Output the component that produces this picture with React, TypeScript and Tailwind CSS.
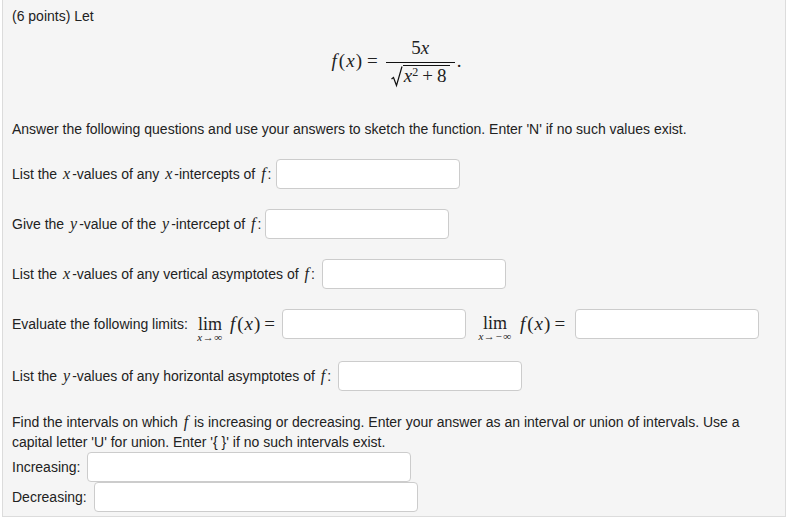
import React from "react";

function V({ children }: { children: React.ReactNode }) {
  return <span className="font-['Liberation_Serif','DejaVu_Serif',serif] italic text-[16px] leading-none px-[2px]">{children}</span>;
}

function Box({ className = "" }: { className?: string }) {
  return <input type="text" className={"h-[30px] rounded-[4px] border border-[#ccc] bg-white outline-none " + className} />;
}

function Lim({ sub }: { sub: string }) {
  return (
    <span className="relative inline-block font-['Liberation_Serif','DejaVu_Serif',serif] text-[18px] leading-none">
      lim
      <span className="absolute left-1/2 top-[17px] -translate-x-1/2 whitespace-nowrap text-[11px] italic leading-none tracking-[0.5px]">{sub}</span>
    </span>
  );
}

function Fx() {
  return (
    <span className="font-['Liberation_Serif','DejaVu_Serif',serif] text-[19px] leading-none whitespace-nowrap">
      <i className="pr-[2px]">f</i>(<i className="px-[1px]">x</i>)<span className="ml-[4px] mr-[6px]">=</span>
    </span>
  );
}

export default function App() {
  return (
    <div className="w-[789px] h-[520px] bg-white">
      <div className="ml-[2px] w-[784px] h-[517px] bg-[#f5f5f5] border-l border-r border-b border-[#dcdcdc] pl-[9px] pt-[6px] text-[14px] leading-[20px] text-[#222] font-['Liberation_Sans',Arial,sans-serif]">
        <div>(6 points) Let</div>

        <div className="flex justify-center items-center h-[52px] mt-[9px] pr-[4px] font-['Liberation_Serif','DejaVu_Serif',serif] text-[19px]">
          <span className="whitespace-nowrap">
            <i className="pr-[2px]">f</i>(<i className="px-[1px]">x</i>)
          </span>
          <span className="ml-[5px] mr-[8px]">=</span>
          <span className="inline-flex flex-col items-center">
            <span className="leading-[22px] pb-[3px]">5<i>x</i></span>
            <span className="w-[69px] border-t border-[#111]" />
            <span className="flex items-end leading-[20px] pt-[2px]">
              <svg width="12" height="22" viewBox="0 0 12 22" className="mb-[-2px]">
                <path d="M0.5 13 L2.5 11.5 L5.5 19.5 L11 0.5" fill="none" stroke="#111" strokeWidth="1.2" />
              </svg>
              <span className="border-t border-[#111] pl-[1px] pr-[3px]">
                <i>x</i>
                <sup className="text-[12px]">2</sup>
                <span className="mx-[4px]">+</span>8
              </span>
            </span>
          </span>
          <span className="ml-[2px]">.</span>
        </div>

        <div className="mt-[32px]">
          Answer the following questions and use your answers to sketch the function. Enter 'N' if no such values exist.
        </div>

        <div className="flex items-center h-[30px] mt-[20px]">
          <span>
            List the <V>x</V>-values of any <V>x</V>-intercepts of <V>f</V>:
          </span>
          <Box className="w-[184px] ml-[5px]" />
        </div>

        <div className="flex items-center h-[30px] mt-[20px]">
          <span>
            Give the <V>y</V>-value of the <V>y</V>-intercept of <V>f</V>:
          </span>
          <Box className="w-[184px] ml-[4px]" />
        </div>

        <div className="flex items-center h-[30px] mt-[20px]">
          <span>
            List the <V>x</V>-values of any vertical asymptotes of <V>f</V>:
          </span>
          <Box className="w-[184px] ml-[7px]" />
        </div>

        <div className="flex items-center h-[30px] mt-[20px]">
          <span className="mr-[10px]">Evaluate the following limits:</span>
          <Lim sub="x→∞" />
          <span className="ml-[8px]">
            <Fx />
          </span>
          <Box className="w-[184px] ml-[1px]" />
          <span className="ml-[17px]">
            <Lim sub="x→−∞" />
          </span>
          <span className="ml-[13px]">
            <Fx />
          </span>
          <Box className="w-[184px] ml-[4px]" />
        </div>

        <div className="flex items-center h-[30px] mt-[22px]">
          <span>
            List the <V>y</V>-values of any horizontal asymptotes of <V>f</V>:
          </span>
          <Box className="w-[184px] ml-[7px]" />
        </div>

        <div className="mt-[21px] pr-[30px]">
          Find the intervals on which <V>f</V> is increasing or decreasing. Enter your answer as an interval or union of intervals. Use a capital letter 'U' for union. Enter '{"{ }"}' if no such intervals exist.
        </div>

        <div className="flex items-center h-[30px]">
          <span>Increasing:</span>
          <Box className="w-[324px] ml-[7px]" />
        </div>
        <div className="flex items-center h-[30px]">
          <span>Decreasing:</span>
          <Box className="w-[324px] ml-[7px]" />
        </div>
      </div>
    </div>
  );
}
